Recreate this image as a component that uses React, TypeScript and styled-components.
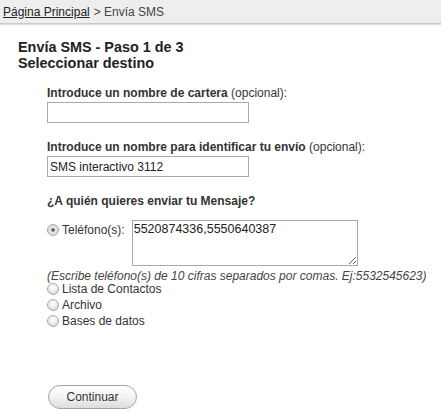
import React from "react";
import styled, { createGlobalStyle } from "styled-components";

const Global = createGlobalStyle`
  html, body { margin: 0; padding: 0; background: #fff; }
  body { font-family: "Liberation Sans", Arial, sans-serif; font-size: 12px; color: #333; }
`;

const Breadcrumb = styled.nav`
  height: 23px;
  background: #eeeeee;
  border-bottom: 1px solid #c9c9c9;
  box-shadow: 0 1px 1px #e2e2e2;
  display: flex;
  align-items: center;
  padding-left: 3px;
  font-size: 12px;
  color: #444;
`;

const CrumbLink = styled.a`
  color: #222;
  font-weight: normal;
  text-decoration: underline;
  margin-right: 4px;
`;

const Content = styled.main`
  padding: 15px 0 0 18px;
`;

const Title = styled.h1`
  margin: 0;
  font-size: 14.4px;
  line-height: 16px;
  font-weight: bold;
  color: #222;
`;

const Form = styled.form`
  margin: 15px 0 0 29px;
  display: flex;
  flex-direction: column;
`;

const Field = styled.div`
  display: flex;
  flex-direction: column;
  gap: 2px;
  margin-bottom: 17px;
`;

const Label = styled.label`
  font-size: 12px;
  line-height: 14px;
  color: #333;
  b { font-weight: bold; }
`;

const TextInput = styled.input`
  box-sizing: border-box;
  width: 202px;
  height: 21px;
  border: 1px solid #a9a9a9;
  padding: 0 2px;
  font-family: "Liberation Sans", Arial, sans-serif;
  font-size: 12px;
  color: #222;
  outline: none;
`;

const Question = styled.div`
  font-weight: bold;
  font-size: 12px;
  line-height: 14px;
  margin-bottom: 14px;
`;

const Option = styled.label`
  display: flex;
  align-items: flex-start;
  gap: 3px;
  font-size: 12px;
  line-height: 16px;
  color: #333;
`;

const Radio = styled.input.attrs({ type: "radio" })`
  appearance: none;
  margin: 2px 0 0 0;
  width: 12px;
  height: 12px;
  border-radius: 50%;
  border: 1px solid #a8a8a8;
  box-sizing: border-box;
  background: radial-gradient(circle at 50% 35%, #ffffff 0%, #eeeeee 45%, #c9c9c9 100%);
  flex: none;
  &:checked {
    background: radial-gradient(circle at 50% 50%, #555 0%, #666 20%, #e8e8e8 30%, #d4d4d4 100%);
  }
`;

const PhoneText = styled.span`
  margin-right: 4px;
`;

const PhoneArea = styled.textarea`
  box-sizing: border-box;
  width: 226px;
  height: 46px;
  margin: -2px 0 0 0;
  border: 1px solid #a9a9a9;
  padding: 1px 1px;
  font-family: "Liberation Sans", Arial, sans-serif;
  font-size: 12.5px;
  color: #222;
  resize: both;
  outline: none;
`;

const Hint = styled.div`
  font-style: italic;
  font-size: 12px;
  line-height: 14px;
  color: #444;
  margin: 3px 0 0 0;
`;

const Options = styled.div`
  display: flex;
  flex-direction: column;
  margin-top: -2px;
`;

const Button = styled.button`
  margin-top: 56px;
  align-self: flex-start;
  margin-left: 1px;
  width: 89px;
  height: 24px;
  border-radius: 12px;
  border: 1px solid #a5a5a5;
  background: linear-gradient(#ffffff 0%, #f3f3f3 50%, #dcdcdc 100%);
  font-family: "Liberation Sans", Arial, sans-serif;
  font-size: 12px;
  color: #333;
  cursor: pointer;
`;

export default function App() {
  return (
    <>
      <Global />
      <Breadcrumb>
        <CrumbLink href="#">Página Principal</CrumbLink>
        <span>&gt; Envía SMS</span>
      </Breadcrumb>
      <Content>
        <Title>
          Envía SMS - Paso 1 de 3
          <br />
          Seleccionar destino
        </Title>
        <Form onSubmit={(e) => e.preventDefault()}>
          <Field>
            <Label>
              <b>Introduce un nombre de cartera</b> (opcional):
            </Label>
            <TextInput type="text" defaultValue="" />
          </Field>
          <Field>
            <Label>
              <b>Introduce un nombre para identificar tu envío</b> (opcional):
            </Label>
            <TextInput type="text" defaultValue="SMS interactivo 3112" />
          </Field>
          <Question>¿A quién quieres enviar tu Mensaje?</Question>
          <Option>
            <Radio name="dest" defaultChecked />
            <PhoneText>Teléfono(s):</PhoneText>
            <PhoneArea defaultValue="5520874336,5550640387" />
          </Option>
          <Hint>(Escribe teléfono(s) de 10 cifras separados por comas. Ej:5532545623)</Hint>
          <Options>
            <Option>
              <Radio name="dest" />
              Lista de Contactos
            </Option>
            <Option>
              <Radio name="dest" />
              Archivo
            </Option>
            <Option>
              <Radio name="dest" />
              Bases de datos
            </Option>
          </Options>
          <Button type="submit">Continuar</Button>
        </Form>
      </Content>
    </>
  );
}
